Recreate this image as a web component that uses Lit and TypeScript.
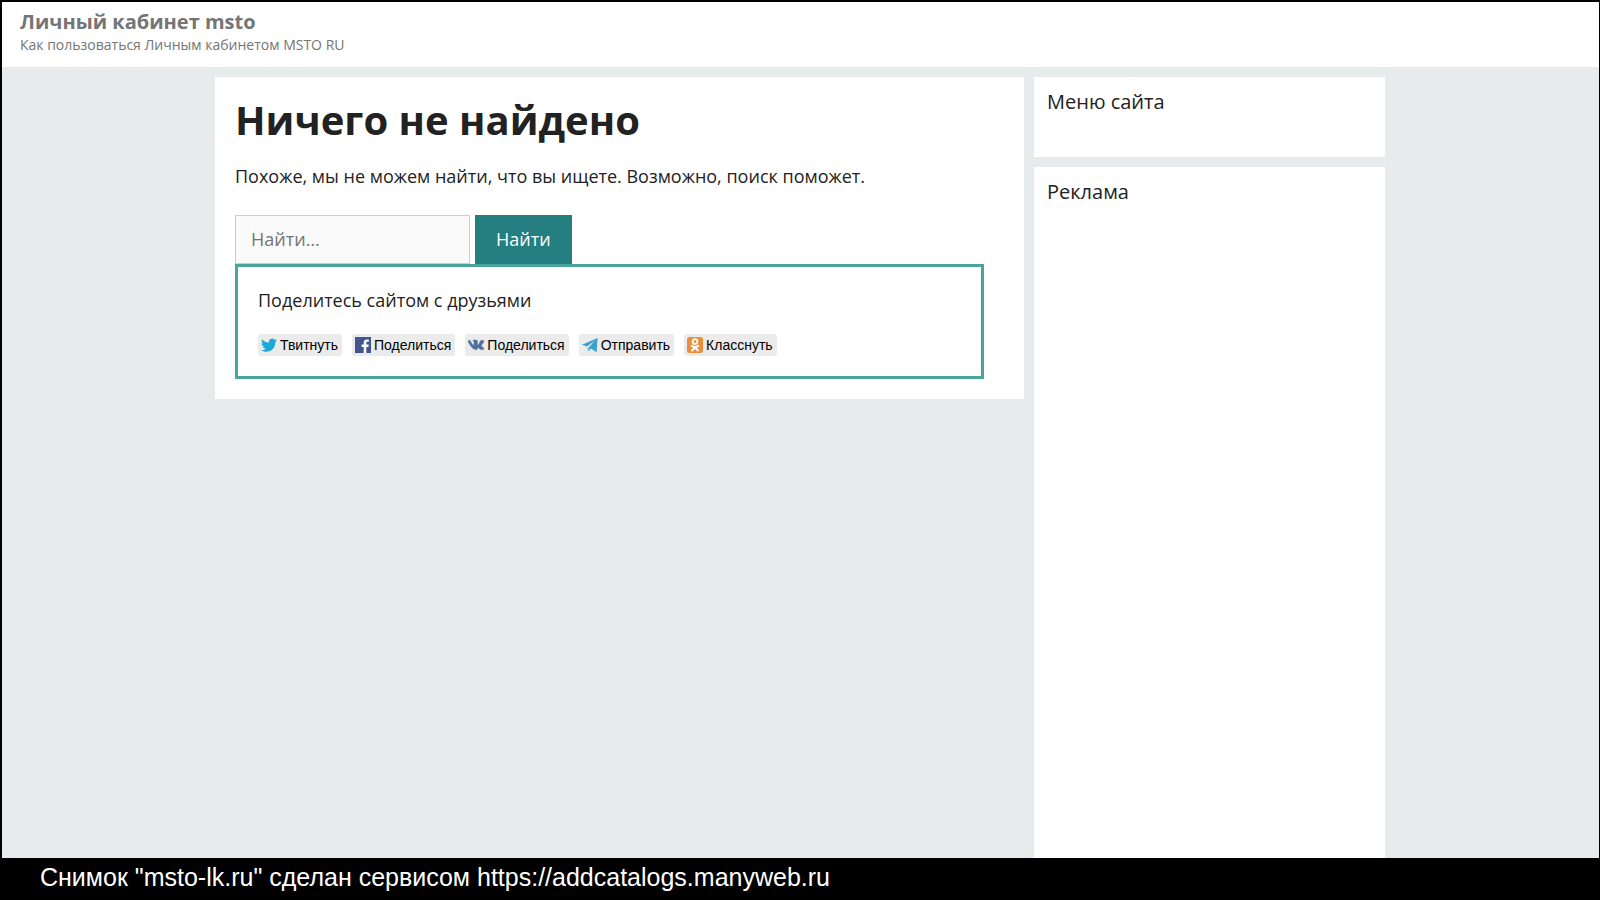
import { LitElement, html, css, svg } from "lit";
import { customElement } from "lit/decorators.js";

const twitter = svg`<path fill="#1da8d8" d="M16 3.2c-.6.3-1.200.4-1.900.5.7-.4 1.200-1 1.400-1.800-.6.4-1.300.6-2.100.8A3.300 3.300 0 0 0 7.800 5.700C5.100 5.600 2.700 4.300 1.100 2.300.2 3.800.7 5.700 2.100 6.700c-.5 0-1-.2-1.500-.4 0 1.500 1.100 2.900 2.600 3.200-.5.1-1 .2-1.500.1.400 1.300 1.600 2.200 3.100 2.300A6.600 6.600 0 0 1 0 13.200c1.500.9 3.200 1.500 5 1.500 6.100 0 9.500-5.100 9.300-9.800.7-.4 1.200-1 1.700-1.700z"/>`;
const facebook = svg`<rect width="16" height="16" fill="#43558f"/><path fill="#fff" d="M8.700 16V9.900H6.600V7.500h2.100V5.700c0-2.100 1.300-3.300 3.200-3.300.9 0 1.700.1 1.900.1v2.200h-1.300c-1 0-1.200.5-1.200 1.200v1.600h2.400l-.3 2.400h-2.100V16z"/>`;
const vk = svg`<path fill="#4d6f9b" stroke="#4d6f9b" stroke-width=".4" d="M7.800 12.700h1s.3 0 .4-.2c.1-.2.1-.5.100-.5s0-1.400.6-1.600c.6-.2 1.400 1.400 2.200 1.900.6.4 1.100.3 1.100.3l2.100 0s1.100-.1.600-1c0-.1-.3-.7-1.600-1.900-1.400-1.300-1.200-1.100.5-3.300 1-1.400 1.400-2.200 1.300-2.600-.1-.3-.9-.2-.9-.2h-2.400s-.2 0-.3.100c-.1.100-.2.300-.2.300s-.4 1-.9 1.900c-1.100 1.800-1.500 1.900-1.700 1.800-.4-.3-.3-1.100-.3-1.700 0-1.800.3-2.600-.6-2.800-.3-.1-.5-.1-1.200-.1-1 0-1.800 0-2.300.200-.3.200-.6.500-.4.500.2 0 .6.100.8.400.3.400.3 1.300.3 1.300s.2 2.400-.4 2.700c-.4.200-.9-.2-2.100-2.200-.6-1-1-2.100-1-2.100s-.1-.2-.2-.3c-.2-.1-.4-.2-.4-.2L.4 3.500s-.3 0-.4.200c-.1.100 0 .4 0 .4s1.700 4.100 3.700 6.200c1.800 1.900 3.900 2.400 4.100 2.400z"/>`;
const telegram = svg`<path fill="#36a3cf" d="M0 7.700 15.600.9 14.600 15.200 8.900 11.500 6.200 14.300 5 9.600z"/><path fill="#ebebeb" d="M5 9.400 13 3.600 6.700 10.600 6.200 13.200z"/>`;
const odnoklassniki = svg`<rect width="16" height="16" rx="2.500" fill="#eb8e3c"/><g fill="none" stroke="#fff"><circle cx="8" cy="4.600" r="2.400" stroke-width="1.800"/><path stroke-width="2" stroke-linecap="round" d="M4.800 8.900c2 1.400 4.400 1.400 6.400 0M8 10.300l-2.900 3.200M8 10.300l2.900 3.200"/></g>`;

const shares = [
  { icon: twitter, label: "Твитнуть" },
  { icon: facebook, label: "Поделиться" },
  { icon: vk, label: "Поделиться" },
  { icon: telegram, label: "Отправить" },
  { icon: odnoklassniki, label: "Класснуть" },
];

@customElement("app-root")
export class AppRoot extends LitElement {
  static styles = css`
    :host {
      display: flex;
      flex-direction: column;
      box-sizing: border-box;
      min-height: 100vh;
      background: #000;
      color: #222;
      font-family: "Open Sans", sans-serif;
      font-size: 18px;
      line-height: 27px;
    }
    * { box-sizing: border-box; }
    .page {
      flex: 1;
      display: flex;
      flex-direction: column;
      margin: 2px 1px 0 2px;
      background: #e8ebec;
    }
    .header {
      padding: 7px 18px 12px;
      background: #fff;
      color: #757575;
    }
    .site {
      margin: 0;
      font-size: 20px;
      line-height: 25px;
      font-weight: 700;
    }
    .site a { color: inherit; text-decoration: none; }
    .tagline { margin: 0; font-size: 14px; line-height: 21px; }
    .columns {
      flex: 1;
      display: grid;
      grid-template-columns: minmax(0, 1fr) 30%;
      gap: 10px;
      width: 100%;
      max-width: 1171px;
      margin: 0 auto;
      padding: 10px 1px 0 0;
    }
    .card { align-self: start; padding: 20px; background: #fff; }
    .heading {
      margin: 0 0 20px;
      font-size: 40px;
      line-height: 46px;
      font-weight: 700;
    }
    .text { margin: 0 0 25px; }
    .search { display: flex; gap: 5px; }
    .field {
      width: 235px;
      height: 49px;
      padding: 0 15px 2px;
      border: 1px solid #ccc;
      border-radius: 0;
      background: #fafafa;
      color: #666;
      font: inherit;
      outline: none;
    }
    .field::placeholder { color: #757575; opacity: 1; }
    .submit {
      padding: 0 20px;
      border: 1px solid #257f80;
      background: #257f80;
      color: #fff;
      font: inherit;
      cursor: pointer;
    }
    .share {
      margin-right: 20px;
      padding: 20px;
      border: 3px solid #4aa59e;
    }
    .share-title { margin: 0 0 20px; }
    .buttons { display: flex; flex-wrap: wrap; gap: 10px; }
    .pill {
      display: flex;
      align-items: center;
      gap: 3px;
      height: 22px;
      padding: 0 4px 0 3px;
      border: 0;
      border-radius: 3px;
      background: #ebebeb;
      color: #000;
      font: 14px/22px "Liberation Sans", Arial, sans-serif;
      cursor: pointer;
    }
    .icon { width: 16px; height: 16px; flex: none; }
    .side { display: flex; flex-direction: column; gap: 10px; }
    .widget { padding: 12px 13px; background: #fff; }
    .widget:last-child { flex: 1; }
    .widget-title {
      margin: 0 0 30px;
      font-size: 20px;
      line-height: 26px;
      font-weight: 400;
    }
    .caption {
      padding: 0 40px 4px;
      color: #fff;
      font: 25px/38px "Liberation Sans", Arial, sans-serif;
    }
  `;

  render() {
    return html`
      <div class="page">
        <header class="header">
          <p class="site"><a href="#">Личный кабинет msto</a></p>
          <p class="tagline">Как пользоваться Личным кабинетом MSTO RU</p>
        </header>
        <div class="columns">
          <main class="card">
            <h1 class="heading">Ничего не найдено</h1>
            <p class="text">Похоже, мы не можем найти, что вы ищете. Возможно, поиск поможет.</p>
            <form class="search" @submit=${(e: Event) => e.preventDefault()}>
              <input class="field" type="search" placeholder="Найти…" aria-label="Найти" />
              <button class="submit" type="submit">Найти</button>
            </form>
            <section class="share">
              <p class="share-title">Поделитесь сайтом с друзьями</p>
              <div class="buttons">
                ${shares.map(
                  (s) => html`<button class="pill" type="button">
                    <svg class="icon" viewBox="0 0 16 16" aria-hidden="true">${s.icon}</svg>
                    <span>${s.label}</span>
                  </button>`
                )}
              </div>
            </section>
          </main>
          <aside class="side">
            <section class="widget"><h2 class="widget-title">Меню сайта</h2></section>
            <section class="widget"><h2 class="widget-title">Реклама</h2></section>
          </aside>
        </div>
      </div>
      <footer class="caption">Снимок "msto-lk.ru" сделан сервисом https://addcatalogs.manyweb.ru</footer>
    `;
  }
}
